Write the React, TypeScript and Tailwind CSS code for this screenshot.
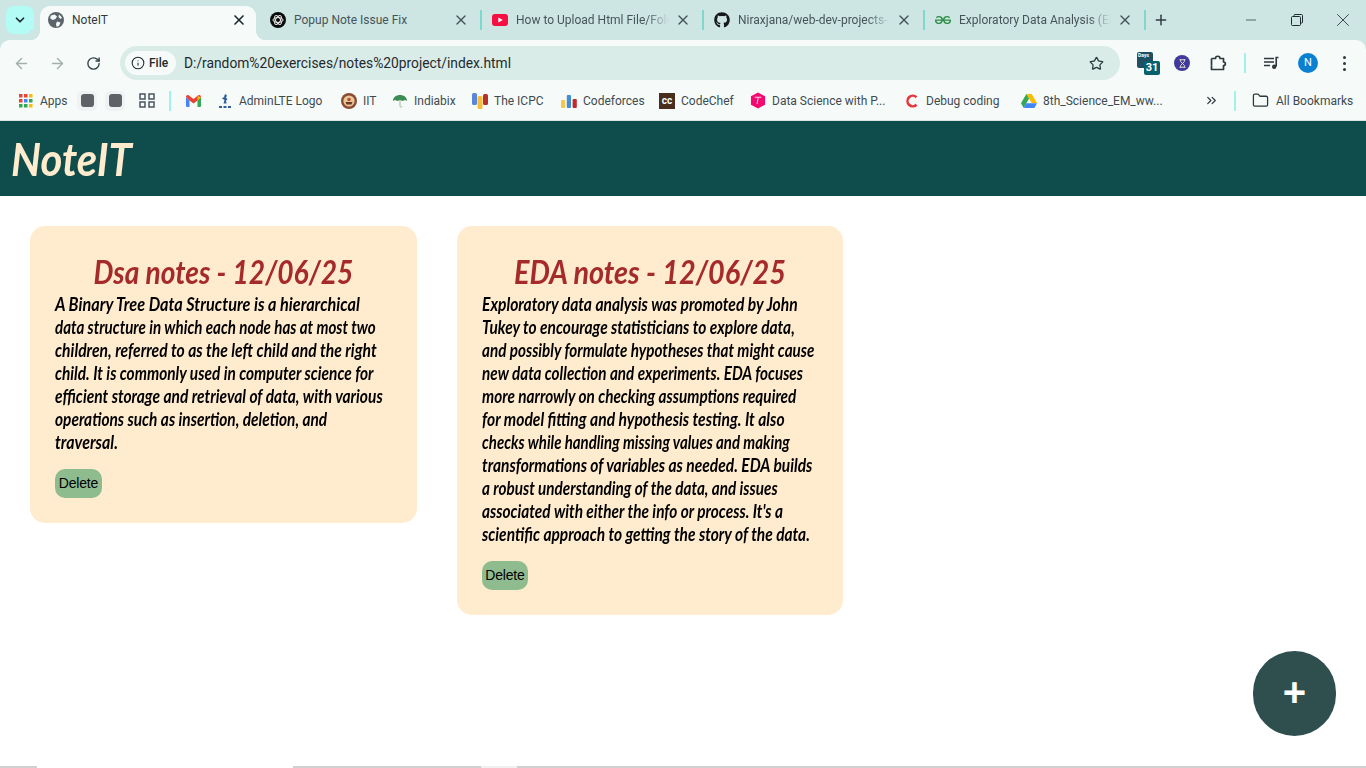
import React from "react";
import { FaGithub } from "react-icons/fa";
import { SiGeeksforgeeks } from "react-icons/si";
import { ChevronDown, X, Plus, ArrowLeft, ArrowRight, RotateCw, Info, Star, ChevronsRight, Folder, Minus, Hourglass } from "lucide-react";

const ui = { fontFamily: 'Roboto, "Noto Sans", sans-serif' };
const hand = { fontFamily: 'Lato, sans-serif' };

const Sep = () => <div className="w-[2px] h-[20px] bg-[#7fd8cd] shrink-0" />;
const SepLight = () => <div className="w-[2px] h-[20px] bg-[#a3f2ea] shrink-0" />;

function Tab({ w, icon, title, fade, pl }: { w: string; icon: React.ReactNode; title: string; fade?: boolean; pl: string }) {
  return (
    <div className={`${w} ${pl} shrink-0 h-[40px] pr-[11px] flex items-center`}>
      <div className="w-[16px] h-[16px] flex items-center justify-center shrink-0">{icon}</div>
      <div className="ml-[8px] flex-1 min-w-0 overflow-hidden whitespace-nowrap text-[12px] text-[#46545a]" style={fade ? { ...ui, maskImage: "linear-gradient(to right, #000 85%, transparent)" } : ui}>{title}</div>
      <X size={16} strokeWidth={2} className="text-[#46545a] shrink-0 ml-[6px]" />
    </div>
  );
}

function Mark({ icon, label, cls }: { icon: React.ReactNode; label: string; cls: string }) {
  return (
    <div className={`${cls} flex items-center shrink-0`}>
      <div className="w-[16px] h-[16px] flex items-center justify-center shrink-0">{icon}</div>
      {label && <span className="ml-[6px] text-[12px] text-[#3f4a50] whitespace-nowrap" style={ui}>{label}</span>}
    </div>
  );
}

const Openai = () => (
  <svg width="16" height="16" viewBox="0 0 16 16"><circle cx="8" cy="8" r="8" fill="#0a0a0a" /><g fill="none" stroke="#e8e8e8" strokeWidth="1"><ellipse cx="8" cy="8" rx="5" ry="2.400" /><ellipse cx="8" cy="8" rx="5" ry="2.400" transform="rotate(60 8 8)" /><ellipse cx="8" cy="8" rx="5" ry="2.400" transform="rotate(120 8 8)" /></g></svg>
);
const Globe = () => (
  <svg width="16" height="16" viewBox="0 0 16 16"><circle cx="8" cy="8" r="8" fill="#5a646a" /><path d="M3 3.500 6.500 2.500 9 4.500 7.500 7 4.500 8 2 6ZM9 9.500l3.500 1L11 14l-2.500.8L8 12ZM11 2.500l3 3-1.500 1.500L10.500 5Z" fill="#f6fbf9" /></svg>
);
const Youtube = () => (
  <svg width="16" height="12" viewBox="0 0 16 12"><rect width="16" height="12" rx="3" fill="#f50f43" /><path d="M6.300 3.500 10.800 6 6.300 8.500Z" fill="#fff" /></svg>
);
const Apps = () => (
  <svg width="14" height="14" viewBox="0 0 14 14">
    {[["#ea4335",0,0],["#ea4335",5,0],["#fbbc04",10,0],["#ea4335",0,5],["#4285f4",5,5],["#34a853",10,5],["#34a853",0,10],["#34a853",5,10],["#fbbc04",10,10]].map(([c,x,y],i)=><rect key={i} x={x as number} y={y as number} width="3.500" height="3.500" fill={c as string}/>)}
  </svg>
);
const Gmail = () => (
  <svg width="15" height="12" viewBox="0 0 15 12"><path d="M0 2v9a1 1 0 0 0 1 1h2.500V5.500Z" fill="#4285f4"/><path d="M15 2v9a1 1 0 0 1-1 1h-2.500V5.500Z" fill="#34a853"/><path d="M0 2C0 .5 1.500-.5 3 .5l4.500 3.500L12 .5c1.500-1 3 0 3 1.500l-3.500 3.500L7.500 8.500 3.500 5.500Z" fill="#ea4335"/><path d="M11.500 1.200 15 2l-3.500 3.500Z" fill="#fbbc04"/></svg>
);
const Admin = () => (
  <svg width="16" height="16" viewBox="0 0 16 16"><path d="M8 1l2 1.500-1 2 1.500 2-1.500 1 .5 3H6.500l1-3.500L5 5.500 7 4Z" fill="#2f5f9e"/><rect x="2" y="13" width="3" height="2" fill="#2f5f9e"/><rect x="6.500" y="13" width="3" height="2" fill="#2f5f9e"/><rect x="11" y="13" width="3" height="2" fill="#2f5f9e"/></svg>
);
const Iit = () => (
  <svg width="16" height="16" viewBox="0 0 16 16"><circle cx="8" cy="8" r="8" fill="#8a4b32"/><circle cx="8" cy="8" r="5.600" fill="#e9c79a"/><path d="M4.500 9h7l-1 2.500h-5Z" fill="#6b3a22"/><circle cx="8" cy="6.500" r="1.800" fill="#b5562e"/></svg>
);
const Umbrella = () => (
  <svg width="16" height="16" viewBox="0 0 16 16"><path d="M1 8C1 4 4.500 2 8 2s7 2 7 6l-2-1-2.500 1L8 7 5.500 8 3 7Z" fill="#3d8c54"/><path d="M8 7v6c0 1.500 2 1.500 2 .3" stroke="#9fb8a6" strokeWidth="1" fill="none"/></svg>
);
const Icpc = () => (
  <svg width="16" height="16" viewBox="0 0 16 16"><rect x="0" y="0" width="5" height="12" rx="1.500" fill="#5b86d6"/><rect x="5.500" y="3" width="5" height="13" rx="1.500" fill="#f6bd3a"/><rect x="11" y="1" width="5" height="11" rx="1.500" fill="#b9302a"/></svg>
);
const Cf = () => (
  <svg width="16" height="14" viewBox="0 0 16 14"><rect x="0" y="6" width="4.200" height="8" rx="1" fill="#f6c64f"/><rect x="5.800" y="1" width="4.200" height="13" rx="1" fill="#3f8fd2"/><rect x="11.600" y="5" width="4.200" height="9" rx="1" fill="#c0282d"/></svg>
);
const Cc = () => (
  <div className="w-[16px] h-[16px] bg-[#4a2e1d] text-white text-[10px] font-bold leading-[16px] text-center" style={ui}>cc</div>
);
const Dcamp = () => (
  <svg width="17" height="17" viewBox="0 0 17 17"><path d="M8.500 0 16 4v9l-7.500 4L1 13V4Z" fill="#f5096f"/><path d="M5 5h7M8.800 5 7.500 12" stroke="#ffd2e5" strokeWidth="1.100" fill="none"/></svg>
);
const Debug = () => (
  <svg width="14" height="14" viewBox="0 0 14 14"><path d="M11.500 3.200A5.300 5.300 0 1 0 11.500 10.800" stroke="#e8373c" strokeWidth="2.600" fill="none"/></svg>
);
const Drive = () => (
  <svg width="16" height="14" viewBox="0 0 16 14"><path d="M5.300 0h5.400l5.300 9h-5.300Z" fill="#fbbc04"/><path d="M5.300 0 8 4.600 2.700 14 0 9.300Z" fill="#34a853"/><path d="M5.300 9.300H16L13.400 14H2.700Z" fill="#4285f4"/></svg>
);
const Qr = () => (
  <svg width="16" height="15" viewBox="0 0 16 15" fill="none" stroke="#4b5560" strokeWidth="1.500"><rect x="1" y="1" width="5" height="5"/><rect x="10" y="1" width="5" height="5"/><rect x="1" y="9" width="5" height="5"/><rect x="10" y="9" width="5" height="5"/></svg>
);
const Ext = () => (
  <svg width="18" height="18" viewBox="0 0 18 18" fill="none" stroke="#2c383c" strokeWidth="1.700" strokeLinejoin="round"><path d="M2.500 4.500h4c0-3 4.500-3 4.500 0h3.500v3.500c2.500 0 2.500 3.500 0 3.500v4h-12v-4" /><path d="M2.500 4.500v7" /></svg>
);
const Queue = () => (
  <svg width="16" height="14" viewBox="0 0 16 14" fill="none" stroke="#2c383c" strokeWidth="1.600"><path d="M0 2.500h10M0 6h10M0 9.500h6" /><path d="M14.500 1.500h-2.300v9" /><circle cx="10.200" cy="10.800" r="2.200" fill="#2c383c" stroke="none" /></svg>
);
const Days = () => (
  <div className="relative w-[23px] h-[24px] shrink-0">
    <div className="w-[16px] h-[16px] mt-[1px] bg-[#1f4f60] rounded-[2px] text-[5px] font-bold text-white leading-[7px] pl-[1px]" style={ui}>Days</div>
    <div className="absolute right-[0px] bottom-[0px] w-[16px] h-[14px] bg-[#06606e] rounded-[2px] text-[11px] font-bold text-white leading-[14px] text-center" style={ui}>31</div>
  </div>
);

const note1: [string, string][] = [
  ["A Binary Tree Data Structure is a hierarchical", "scale-x-[0.902]"],
  ["data structure in which each node has at most two", "scale-x-[0.84]"],
  ["children, referred to as the left child and the right", "scale-x-[0.87]"],
  ["child. It is commonly used in computer science for", "scale-x-[0.857]"],
  ["efficient storage and retrieval of data, with various", "scale-x-[0.863]"],
  ["operations such as insertion, deletion, and", "scale-x-[0.858]"],
  ["traversal.", "scale-x-[0.887]"],
];
const note2: [string, string][] = [
  ["Exploratory data analysis was promoted by John", "scale-x-[0.868]"],
  ["Tukey to encourage statisticians to explore data,", "scale-x-[0.86]"],
  ["and possibly formulate hypotheses that might cause", "scale-x-[0.847]"],
  ["new data collection and experiments. EDA focuses", "scale-x-[0.847]"],
  ["more narrowly on checking assumptions required", "scale-x-[0.851]"],
  ["for model fitting and hypothesis testing. It also", "scale-x-[0.868]"],
  ["checks while handling missing values and making", "scale-x-[0.832]"],
  ["transformations of variables as needed. EDA builds", "scale-x-[0.864]"],
  ["a robust understanding of the data, and issues", "scale-x-[0.848]"],
  ["associated with either the info or process. It's a", "scale-x-[0.855]"],
  ["scientific approach to getting the story of the data.", "scale-x-[0.861]"],
];

function Card({ w, bw, title, tcls, lines }: { w: string; bw: string; title: string; tcls: string; lines: [string, string][] }) {
  return (
    <div className={`${w} shrink-0 self-start bg-[#ffebcd] rounded-[15px] p-[25px]`}>
      <h2 className={`${tcls} h-[42px] text-[32px] leading-[42px] text-center font-bold italic text-[#a52a2a] whitespace-nowrap`} style={hand}>{title}</h2>
      <div className="text-[18px] leading-[23px] font-bold italic text-black whitespace-nowrap" style={hand}>
        {lines.map(([l, c]) => <div key={l} className={`${c} origin-left`}>{l}</div>)}
      </div>
      <button className={`${bw} mt-[15px] block h-[29px] rounded-[10px] bg-[#8fbc8f] text-black text-[14px] tracking-[-0.2px] leading-[15px] text-center`} style={{ fontFamily: '"Liberation Sans", Arial, sans-serif' }}>Delete</button>
    </div>
  );
}

export default function App() {
  return (
    <div className="relative h-[768px] w-[1366px] overflow-hidden bg-white flex flex-col">
      {/* tab strip */}
      <div className="h-[40px] bg-[#cde6e3] flex items-center shrink-0">
        <div className="ml-[6px] w-[28px] h-[28px] rounded-[8px] bg-[#b3fbf5] flex items-center justify-center shrink-0"><ChevronDown size={14} strokeWidth={3} className="text-[#1f2a2e]" /></div>
        <div className="relative ml-[6px] w-[216px] h-[34px] self-end rounded-t-[10px] bg-[#f6fbf9] pl-[8px] pr-[9px] pb-[6px] flex items-center shrink-0">
          <Globe />
          <span className="ml-[8px] flex-1 text-[12px] text-[#30393d]" style={ui}>NoteIT</span>
          <X size={16} strokeWidth={2.500} className="text-[#1f2a2e]" />
          <div className="absolute left-[-10px] bottom-0 w-[10px] h-[10px] bg-[radial-gradient(circle_at_0_0,#cde6e3_10px,#f6fbf9_10.500px)]" />
          <div className="absolute right-[-10px] bottom-0 w-[10px] h-[10px] bg-[radial-gradient(circle_at_100%_0,#cde6e3_10px,#f6fbf9_10.500px)]" />
        </div>
        <Tab w="w-[224px]" pl="pl-[14px]" icon={<Openai />} title="Popup Note Issue Fix" />
        <Sep />
        <Tab w="w-[220px]" pl="pl-[10px]" icon={<Youtube />} title="How to Upload Html File/Folder" fade />
        <Sep />
        <Tab w="w-[219px]" pl="pl-[10px]" icon={<FaGithub size={16} className="text-[#16191c]" />} title="Niraxjana/web-dev-projects-" fade />
        <Sep />
        <Tab w="w-[219px]" pl="pl-[10px]" icon={<SiGeeksforgeeks size={16} className="text-[#2f8d46]" />} title="Exploratory Data Analysis (EDA)" fade />
        <Sep />
        <Plus size={16} strokeWidth={2.200} className="ml-[7px] text-[#2c3a40]" />
        <div className="ml-auto flex items-center shrink-0">
          <div className="w-[46px] flex justify-center"><Minus size={16} strokeWidth={1} className="text-[#1d2a2e]" /></div>
          <div className="w-[46px] flex justify-center"><svg width="12" height="12" viewBox="0 0 12 12" fill="none" stroke="#1d2a2e"><rect x=".5" y="2.500" width="9" height="9" rx="1"/><path d="M3 2.500V1.500a1 1 0 0 1 1-1h6.500a1 1 0 0 1 1 1V8a1 1 0 0 1-1 1h-1"/></svg></div>
          <div className="w-[46px] flex justify-center"><X size={22} strokeWidth={.9} className="text-[#1d2a2e]" /></div>
        </div>
      </div>
      {/* toolbar */}
      <div className="bg-[#cde6e3] shrink-0">
        <div className="h-[41px] pt-[5px] rounded-t-[10px] bg-[#f6fbf9] flex items-center pl-[13px]">
          <ArrowLeft size={17} strokeWidth={2} className="text-[#a3aeae] shrink-0" />
          <ArrowRight size={17} strokeWidth={2} className="ml-[19px] text-[#a3aeae] shrink-0" />
          <RotateCw size={15} strokeWidth={2.200} className="ml-[20px] text-[#34444a] shrink-0" />
          <div className="ml-[19px] w-[1000px] h-[34px] rounded-full bg-[#daece8] flex items-center pl-[5px] pr-[16px] shrink-0">
            <div className="h-[24px] w-[51px] rounded-full bg-[#f6fbf9] flex items-center pl-[6px] shrink-0">
              <Info size={14} strokeWidth={1.800} className="text-[#20292c]" />
              <span className="ml-[4px] text-[12px] text-[#20292c] font-medium" style={ui}>File</span>
            </div>
            <span className="ml-[8px] text-[13.800px] text-[#1f2a2e] whitespace-nowrap" style={ui}>D:/random%20exercises/notes%20project/index.html</span>
            <Star size={15} strokeWidth={2} className="ml-auto text-[#2c383c]" />
          </div>
          <div className="ml-[17px] flex items-center shrink-0"><Days /></div>
          <div className="ml-[14px] w-[16px] h-[16px] rounded-full bg-[#3f3a9c] flex items-center justify-center shrink-0"><Hourglass size={9} strokeWidth={2.400} className="text-[#f4e9d8]" /></div>
          <div className="ml-[19px] shrink-0"><Ext /></div>
          <div className="ml-[17px]"><SepLight /></div>
          <div className="ml-[18px] shrink-0"><Queue /></div>
          <div className="ml-[18px] w-[20px] h-[20px] rounded-full bg-[#0a80d0] text-white text-[11px] flex items-center justify-center shrink-0" style={ui}>N</div>
          <div className="ml-[25px] flex flex-col gap-[3px] shrink-0">
            <div className="w-[3px] h-[3px] rounded-full bg-[#2c383c]" />
            <div className="w-[3px] h-[3px] rounded-full bg-[#2c383c]" />
            <div className="w-[3px] h-[3px] rounded-full bg-[#2c383c]" />
          </div>
        </div>
      </div>
      {/* bookmarks */}
      <div className="h-[40px] bg-[#f6fbf9] border-b border-[#d9e3e1] flex items-center shrink-0 relative pl-[18px]">
        <Mark cls="w-[59px]" icon={<Apps />} label="Apps" />
        <div className="w-[20px] h-[20px] rounded-[5px] bg-[#f0f2f3] flex items-center justify-center shrink-0"><div className="w-[13px] h-[13px] rounded-[3px] bg-[#5f6368]" /></div>
        <div className="ml-[8px] w-[20px] h-[20px] rounded-[5px] bg-[#f0f2f3] flex items-center justify-center shrink-0"><div className="w-[13px] h-[13px] rounded-[3px] bg-[#5f6368]" /></div>
        <div className="ml-[14px]"><Qr /></div>
        <div className="ml-[14px]"><SepLight /></div>
        <Mark cls="ml-[14px] w-[32px]" icon={<Gmail />} label="" />
        <Mark cls="w-[124px]" icon={<Admin />} label="AdminLTE Logo" />
        <Mark cls="w-[51px]" icon={<Iit />} label="IIT" />
        <Mark cls="w-[80px]" icon={<Umbrella />} label="Indiabix" />
        <Mark cls="w-[89px]" icon={<Icpc />} label="The ICPC" />
        <Mark cls="w-[98px]" icon={<Cf />} label="Codeforces" />
        <Mark cls="w-[91px]" icon={<Cc />} label="CodeChef" />
        <Mark cls="w-[154px]" icon={<Dcamp />} label="Data Science with P..." />
        <Mark cls="w-[117px]" icon={<Debug />} label="Debug coding" />
        <Mark cls="w-[183px]" icon={<Drive />} label="8th_Science_EM_ww..." />
        <ChevronsRight size={15} strokeWidth={2} className="text-[#2c383c] shrink-0" />
        <div className="ml-[15px]"><SepLight /></div>
        <Folder size={17} strokeWidth={1.800} className="ml-[16px] text-[#2c383c] shrink-0" />
        <span className="ml-[7px] text-[12px] text-[#3f4a50] whitespace-nowrap" style={ui}>All Bookmarks</span>
      </div>
      {/* page */}
      <header className="h-[75px] bg-[#0f4c4c] shrink-0 flex items-center pl-[11px]">
        <h1 className="text-[46px] font-bold italic text-[#ffebcd] leading-none scale-x-[0.91] origin-left" style={hand}>NoteIT</h1>
      </header>
      <main className="flex-1 flex gap-[40px] pt-[30px] pl-[30px] min-h-0">
        <Card w="w-[387px]" bw="w-[47px]" title="Dsa notes - 12/06/25" tcls="scale-x-[0.88]" lines={note1} />
        <Card w="w-[386px]" bw="w-[46px]" title="EDA notes - 12/06/25" tcls="scale-x-[0.90]" lines={note2} />
      </main>
      <div className="h-[2px] bg-[#d0d0d0] shrink-0 flex">
        <div className="ml-[37px] w-[256px] h-[2px] bg-white" />
        <div className="ml-[188px] w-[36px] h-[2px] bg-[#f0f0f0]" />
      </div>
      <button className="absolute left-[1253px] top-[651px] w-[83px] h-[85px] pb-[3px] rounded-full bg-[#2f4f4f] text-white text-[40px] font-bold leading-none flex items-center justify-center" style={{ fontFamily: '"Liberation Sans", sans-serif' }}>+</button>
    </div>
  );
}
